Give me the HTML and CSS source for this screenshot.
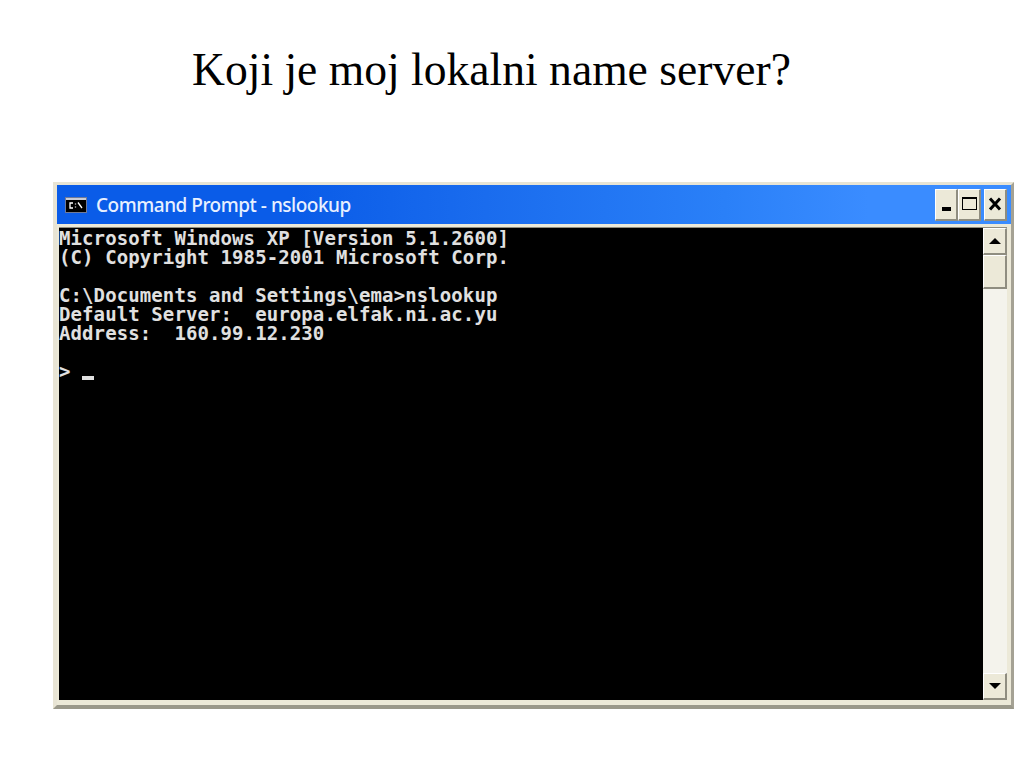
FILE: index.html
```html
<!DOCTYPE html>
<html lang="hr">
<head>
<meta charset="utf-8">
<title>Koji je moj lokalni name server?</title>
<link rel="stylesheet" href="styles.css">
</head>
<body>
<h1 class="heading">Koji je moj lokalni name server?</h1>
<div class="window">
  <div class="titlebar">
    <svg class="app-icon" width="22" height="16" viewBox="0 0 22 16">
      <rect x="0.5" y="0.5" width="21" height="15" fill="#000" stroke="#6f7a99"/>
      <rect x="1" y="1" width="20" height="2" fill="#c9ccd6"/>
      <path d="M8 6H5V11H8M10.500 6.500V7.500M10.500 9.500V10.500M13 5.500L17 11" fill="none" stroke="#fff" stroke-width="1.300"/>
    </svg>
    <span class="title-text">Command Prompt - nslookup</span>
    <div class="controls">
      <div class="ctl ctl-min"><span class="min-bar"></span></div>
      <div class="ctl ctl-max"><span class="max-box"></span></div>
      <div class="ctl ctl-close">
        <svg width="14" height="14" viewBox="0 0 14 14"><path d="M2 1.500L12 12.500M12 1.500L2 12.500" stroke="#000" stroke-width="3"/></svg>
      </div>
    </div>
  </div>
  <div class="client">
    <pre class="console">Microsoft Windows XP [Version 5.1.2600]
(C) Copyright 1985-2001 Microsoft Corp.

C:\Documents and Settings\ema&gt;nslookup
Default Server:  europa.elfak.ni.ac.yu
Address:  160.99.12.230

&gt; <span class="cursor"></span></pre>
    <div class="scrollbar">
      <div class="sb-btn"><span class="arrow-up"></span></div>
      <div class="sb-thumb"></div>
      <div class="sb-track"></div>
      <div class="sb-btn"><span class="arrow-down"></span></div>
    </div>
  </div>
</div>
</body>
</html>
```
FILE: styles.css
```css
html, body {
  margin: 0;
  padding: 0;
  background: #fff;
}
body {
  width: 1024px;
  height: 768px;
  overflow: hidden;
}
.heading {
  margin: 0;
  padding: 42px 0 0 192px;
  height: 182px;
  box-sizing: border-box;
  font: 400 45.6px/56px "Liberation Serif", serif;
  color: #000;
}
.window {
  margin-left: 53px;
  width: 961px;
  height: 527px;
  box-sizing: border-box;
  display: flex;
  flex-direction: column;
  background: #ece9d8;
  border-top: 3px solid #e8e4d4;
  border-left: 4px solid #e8e4d4;
  border-right: 3px solid #a5a294;
  border-bottom: 4px solid #9a988a;
}
.titlebar {
  height: 39px;
  flex: none;
  display: flex;
  align-items: center;
  background: linear-gradient(90deg, #0a5ce8 0%, #0a5ce8 25%, #1a6cee 45%, #2a80f8 70%, #3a8cff 85%, #3a8cff 100%);
  padding: 0 4px 0 8px;
}
.app-icon {
  flex: none;
  margin-right: 9px;
}
.title-text {
  font: 500 19px/24px "Noto Sans", sans-serif;
  color: #e8f0ff;
  letter-spacing: -0.48px;
  white-space: nowrap;
}
.controls {
  margin-left: auto;
  display: flex;
}
.ctl {
  width: 23px;
  height: 32px;
  box-sizing: border-box;
  background: #ece9d8;
  border-top: 1px solid #fff;
  border-left: 1px solid #fff;
  border-right: 2px solid #8f8d80;
  border-bottom: 2px solid #8f8d80;
  display: flex;
  align-items: center;
  justify-content: center;
}
.ctl-close {
  margin-left: 3px;
}
.min-bar {
  width: 9px;
  height: 4px;
  background: #000;
  margin-top: 9px;
}
.max-box {
  width: 15px;
  height: 13px;
  box-sizing: border-box;
  border: 1px solid #000;
  border-top-width: 2px;
  margin-top: -1px;
}
.client {
  flex: 1;
  min-height: 0;
  display: flex;
  margin: 3px 4px 5px 2px;
  border-top: 1px solid #8f8d80;
}
.console {
  flex: 1;
  min-width: 0;
  margin: 0;
  padding: 1px 0 0;
  background: #000;
  color: #e0e0e0;
  font: 700 19px/19px "DejaVu Sans Mono", monospace;
  letter-spacing: 0.1px;
}
.cursor {
  display: inline-block;
  width: 12px;
  height: 4px;
  background: #e0e0e0;
  vertical-align: -2px;
}
.scrollbar {
  flex: none;
  width: 24px;
  display: flex;
  flex-direction: column;
  background: #f4f3ec;
}
.sb-btn {
  height: 27px;
  flex: none;
  box-sizing: border-box;
  background: #ece9d8;
  border-top: 1px solid #fff;
  border-left: 1px solid #fff;
  border-right: 2px solid #8f8d80;
  border-bottom: 2px solid #8f8d80;
  display: flex;
  align-items: center;
  justify-content: center;
}
.sb-thumb {
  height: 34px;
  flex: none;
  box-sizing: border-box;
  background: #ece9d8;
  border-top: 1px solid #fff;
  border-left: 1px solid #fff;
  border-right: 2px solid #8f8d80;
  border-bottom: 2px solid #8f8d80;
}
.sb-track {
  flex: 1;
}
.arrow-up, .arrow-down {
  width: 0;
  height: 0;
  border-left: 6px solid transparent;
  border-right: 6px solid transparent;
}
.arrow-up {
  border-bottom: 6px solid #000;
}
.arrow-down {
  border-top: 6px solid #000;
}
```
